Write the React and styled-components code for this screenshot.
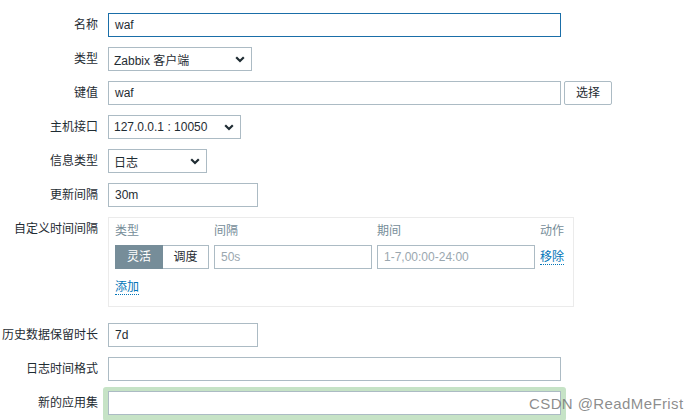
import React from "react";
import styled, { createGlobalStyle } from "styled-components";

const Global = createGlobalStyle`
  html, body { margin: 0; padding: 0; background: #ffffff; }
  body {
    font-family: "Liberation Sans", Arial, "Noto Sans CJK SC", sans-serif;
    font-size: 12px;
    color: #1f2c33;
  }
  * { box-sizing: border-box; }
`;

const Page = styled.div`
  position: relative;
  width: 700px;
  height: 420px;
  overflow: hidden;
  padding-top: 13px;
`;

const Form = styled.div`
  display: grid;
  grid-template-columns: 98px 1fr;
  column-gap: 10px;
  row-gap: 10px;
`;

const Label = styled.div`
  text-align: right;
  line-height: 24px;
  height: 24px;
  white-space: nowrap;
  color: #1f2c33;
`;

const Field = styled.div`
  display: flex;
  align-items: center;
  gap: 3px;
`;

const Input = styled.div`
  width: ${(p) => p.$w}px;
  height: 24px;
  border: 1px solid ${(p) => (p.$focus ? "#1a6ea8" : "#acbbc4")};
  background: #fff;
  padding: 0 6px;
  line-height: 22px;
  color: ${(p) => (p.$ph ? "#9aa7af" : "#1f2c33")};
  white-space: nowrap;
`;

const Select = styled.div`
  width: ${(p) => p.$w}px;
  height: 24px;
  border: 1px solid #acbbc4;
  background: #fff;
  padding: 0 6px 0 5px;
  display: flex;
  align-items: center;
  justify-content: space-between;
  white-space: nowrap;
`;

const Chevron = () => (
  <svg width="10" height="7" viewBox="0 0 10 7">
    <path d="M1.2 1.3 L5 5 L8.8 1.3" fill="none" stroke="#1f2c33" strokeWidth="2.2" />
  </svg>
);

const Button = styled.div`
  width: 48px;
  height: 24px;
  border: 1px solid #acbbc4;
  border-radius: 2px;
  background: #fff;
  text-align: center;
  line-height: 22px;
`;

const Highlight = styled.div`
  margin-left: -5px;
  padding: 4px 5px 6px 5px;
  background: #c6e3c6;
  border-radius: 3px;
  margin-top: -4px;
`;

const IntervalBox = styled.div`
  width: 466px;
  height: 90px;
  border: 1px solid #ebebeb;
  padding: 4px 9px 0 6px;
  margin-bottom: 6px;
  display: grid;
  grid-template-columns: 94px 158px 158px 1fr;
  grid-template-rows: 18px 24px 27px;
  column-gap: 5px;
  row-gap: 5px;
  align-items: center;
`;

const Head = styled.div`
  color: #768d99;
  line-height: 18px;
  text-align: ${(p) => p.$align || "left"};
`;

const Segmented = styled.div`
  display: flex;
  height: 24px;
`;

const Seg = styled.div`
  width: ${(p) => p.$w}px;
  height: 24px;
  line-height: 22px;
  text-align: center;
  border: 1px solid ${(p) => (p.$on ? "#768d99" : "#acbbc4")};
  background: ${(p) => (p.$on ? "#768d99" : "#fff")};
  color: ${(p) => (p.$on ? "#fff" : "#1f2c33")};
  border-left-width: ${(p) => (p.$on ? 1 : 0)}px;
`;

const Link = styled.span`
  color: #0275b8;
  border-bottom: 1px dotted #0275b8;
  line-height: 14px;
  justify-self: ${(p) => p.$justify || "start"};
`;

const Watermark = styled.div`
  position: absolute;
  left: 529px;
  top: 395px;
  font-size: 15px;
  font-family: "Liberation Sans", Arial, sans-serif;
  color: rgba(120, 120, 120, 0.85);
  white-space: nowrap;
  letter-spacing: 0.4px;
`;

export default function App() {
  return (
    <Page>
      <Global />
      <Form>
        <Label>名称</Label>
        <Field>
          <Input $w={453} $focus>waf</Input>
        </Field>

        <Label>类型</Label>
        <Field>
          <Select $w={144}>
            <span>Zabbix 客户端</span>
            <Chevron />
          </Select>
        </Field>

        <Label>键值</Label>
        <Field>
          <Input $w={453}>waf</Input>
          <Button>选择</Button>
        </Field>

        <Label>主机接口</Label>
        <Field>
          <Select $w={133}>
            <span>127.0.0.1 : 10050</span>
            <Chevron />
          </Select>
        </Field>

        <Label>信息类型</Label>
        <Field>
          <Select $w={99}>
            <span>日志</span>
            <Chevron />
          </Select>
        </Field>

        <Label>更新间隔</Label>
        <Field>
          <Input $w={150}>30m</Input>
        </Field>

        <Label>自定义时间间隔</Label>
        <Field>
          <IntervalBox>
            <Head>类型</Head>
            <Head>间隔</Head>
            <Head>期间</Head>
            <Head $align="right">动作</Head>
            <Segmented>
              <Seg $w={48} $on>灵活</Seg>
              <Seg $w={46}>调度</Seg>
            </Segmented>
            <Input $w={158} $ph>50s</Input>
            <Input $w={158} $ph>1-7,00:00-24:00</Input>
            <Link $justify="end">移除</Link>
            <Link>添加</Link>
          </IntervalBox>
        </Field>

        <Label>历史数据保留时长</Label>
        <Field>
          <Input $w={150}>7d</Input>
        </Field>

        <Label>日志时间格式</Label>
        <Field>
          <Input $w={453}></Input>
        </Field>

        <Label>新的应用集</Label>
        <Field>
          <Highlight>
            <Input $w={453}></Input>
          </Highlight>
        </Field>
      </Form>
      <Watermark>CSDN @ReadMeFrist</Watermark>
    </Page>
  );
}
